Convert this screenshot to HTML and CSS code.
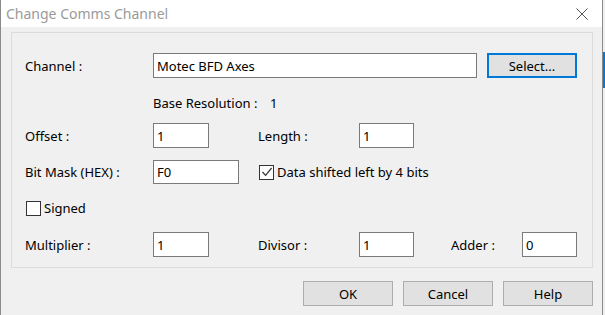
FILE: index.html
```html
<!DOCTYPE html>
<html>
<head>
<meta charset="utf-8">
<link rel="stylesheet" href="styles.css">
</head>
<body>
<div class="screen">
  <div class="window">
    <div class="titlebar">
      <span class="title">Change Comms Channel</span>
      <svg class="close" width="12" height="12" viewBox="0 0 12 12"><path d="M0.5 0.5 L11.5 11.5 M11.5 0.5 L0.5 11.5" stroke="#555" stroke-width="1" fill="none"/></svg>
    </div>
    <div class="client">
      <div class="group">
        <div class="row row-channel">
          <span class="label w-first">Channel :</span>
          <div class="field w-channel">Motec BFD Axes</div>
          <button class="btn btn-default">Select...</button>
        </div>
        <div class="row row-base">
          <span class="label w-first"></span>
          <span class="label w-base">Base Resolution :</span>
          <span class="label">1</span>
        </div>
        <div class="row row-offset">
          <span class="label w-first">Offset :</span>
          <div class="field w-small">1</div>
          <span class="label w-gap2"></span>
          <span class="label w-second">Length :</span>
          <div class="field w-small2">1</div>
        </div>
        <div class="row row-mask">
          <span class="label w-first">Bit Mask (HEX) :</span>
          <div class="field w-mask">F0</div>
          <label class="check check-shift">
            <span class="box"><svg width="12" height="12" viewBox="0 0 12 12"><path d="M1.5 6 L4.6 9.4 L10.6 2" stroke="#333" stroke-width="1.2" fill="none"/></svg></span>
            <span class="label">Data shifted left by 4 bits</span>
          </label>
        </div>
        <div class="row row-signed">
          <label class="check">
            <span class="box"></span>
            <span class="label">Signed</span>
          </label>
        </div>
        <div class="row row-mult">
          <span class="label w-first">Multiplier :</span>
          <div class="field w-small">1</div>
          <span class="label w-gap2"></span>
          <span class="label w-second">Divisor :</span>
          <div class="field w-small2">1</div>
          <span class="label w-gap3"></span>
          <span class="label w-third">Adder :</span>
          <div class="field w-small2">0</div>
        </div>
      </div>
      <div class="buttons">
        <button class="btn">OK</button>
        <button class="btn">Cancel</button>
        <button class="btn">Help</button>
      </div>
    </div>
  </div>
  <div class="behind">
    <div class="behind-blue"></div>
  </div>
</div>
</body>
</html>
```
FILE: styles.css
```css
html, body {
  margin: 0;
  padding: 0;
  background: #f0f0f0;
}
body {
  font-family: "Noto Sans", "Open Sans", sans-serif;
  font-size: 13px;
  color: #000;
}
.screen {
  display: flex;
  width: 605px;
  height: 315px;
  overflow: hidden;
}
.window {
  box-sizing: border-box;
  width: 603px;
  height: 315px;
  flex: none;
  border-left: 1px solid #8a8a8a;
  border-right: 1px solid #8a8a8a;
  background: #f0f0f0;
  display: flex;
  flex-direction: column;
}
.behind {
  width: 2px;
  flex: none;
  background: #f0f0f0;
  padding-top: 52px;
}
.behind-blue {
  height: 36px;
  background: #0078d7;
}
.titlebar {
  box-sizing: border-box;
  flex: none;
  height: 27px;
  background: #fff;
  display: flex;
  align-items: center;
  justify-content: space-between;
  padding: 0 14px 0 5px;
}
.title {
  font-size: 14px;
  color: #9a9a9a;
}
.close {
  display: block;
}
.client {
  flex: none;
  padding: 5px 9px 0 10px;
  display: flex;
  flex-direction: column;
}
.group {
  box-sizing: border-box;
  flex: none;
  height: 236px;
  border: 1px solid #dcdcdc;
  padding: 20px 0 0 13px;
  display: flex;
  flex-direction: column;
}
.row {
  display: flex;
  align-items: center;
  flex: none;
}
.label {
  white-space: nowrap;
}
.w-first { width: 128px; flex: none; }
.w-base { width: 117px; flex: none; }
.w-gap2 { width: 49px; flex: none; }
.w-second { width: 101px; flex: none; }
.w-gap3 { width: 37px; flex: none; }
.w-third { width: 71px; flex: none; }
.field {
  box-sizing: border-box;
  height: 25px;
  background: #fff;
  border: 1px solid #7a7a7a;
  padding: 0 3px;
  display: flex;
  align-items: center;
  flex: none;
}
.w-channel { width: 324px; }
.w-small { width: 56px; }
.w-small2 { width: 55px; }
.w-mask { width: 86px; height: 24px; }
.btn {
  box-sizing: border-box;
  width: 90px;
  height: 25px;
  background: #e1e1e1;
  border: 1px solid #adadad;
  font-family: inherit;
  font-size: 13px;
  color: #000;
  padding: 0;
  margin: 0;
}
.btn-default {
  border: 2px solid #0078d7;
  margin-left: 10px;
}
.row-channel { height: 25px; }
.row-base { height: 20px; margin-top: 15px; }
.row-offset { height: 25px; margin-top: 10px; }
.row-mask { height: 24px; margin-top: 12px; }
.row-signed { height: 20px; margin-top: 14px; }
.row-mult { height: 25px; margin-top: 14px; }
.check {
  display: flex;
  align-items: center;
}
.check-shift { margin-left: 19px; }
.box {
  box-sizing: border-box;
  width: 15px;
  height: 15px;
  border: 1px solid #333;
  background: #fff;
  display: flex;
  align-items: center;
  justify-content: center;
  margin-right: 3px;
  margin-left: 1px;
}
.buttons {
  display: flex;
  justify-content: flex-end;
  gap: 10px;
  margin-top: 13px;
  padding-right: 0;
}
```
